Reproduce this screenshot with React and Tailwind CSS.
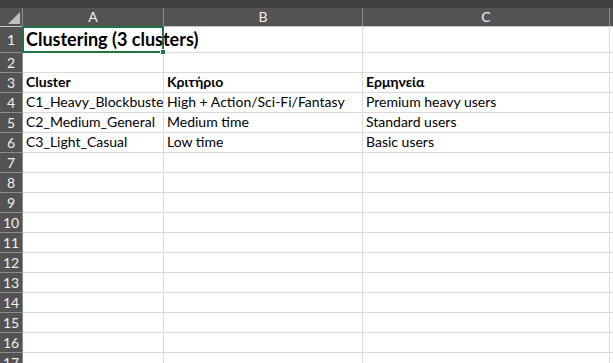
import React from "react";

const rows = [
  { n: 1, a: "Clustering (3 clusters)", title: true },
  { n: 2 },
  { n: 3, a: "Cluster", b: "Κριτήριο", c: "Ερμηνεία", bold: true },
  { n: 4, a: "C1_Heavy_Blockbuster", b: "High + Action/Sci-Fi/Fantasy", c: "Premium heavy users" },
  { n: 5, a: "C2_Medium_General", b: "Medium time", c: "Standard users" },
  { n: 6, a: "C3_Light_Casual", b: "Low time", c: "Basic users" },
];

for (let i = 7; i <= 17; i++) rows.push({ n: i });

const cell = "border-r border-b border-[#dadada] bg-white overflow-hidden whitespace-nowrap flex items-end px-[3px]";

const App = () => {
  return (
    <div
      className="h-[363px] w-[613px] overflow-hidden bg-white text-[14px] leading-[16px] text-black"
      style={{ fontFamily: "Lato, 'Open Sans', sans-serif" }}
    >
      {/* top strip */}
      <div className="h-[8px] bg-[#414141]" />

      {/* column headers */}
      <div className="grid grid-cols-[23px_141px_199px_247px_1fr] grid-rows-[18px] h-[19px] bg-[#535353] border-b border-[#c4c4c4] text-[#f0f0f0]">
        <div className="relative border-r border-[#8c8c8c]">
          <div className="absolute right-[2px] bottom-[2px] w-0 h-0 border-l-[12px] border-l-transparent border-b-[12px] border-b-[#bfbfbf]" />
        </div>
        <div className="border-r border-[#8c8c8c] flex items-center justify-center">A</div>
        <div className="border-r border-[#8c8c8c] flex items-center justify-center">B</div>
        <div className="border-r border-[#8c8c8c] flex items-center justify-center">C</div>
        <div />
      </div>

      {/* sheet rows */}
      {rows.map((r) => (
        <div
          key={r.n}
          className={`grid grid-cols-[23px_141px_199px_247px_1fr] ${r.title ? "grid-rows-[26px] h-[26px]" : "grid-rows-[20px] h-[20px]"}`}
        >
          <div className="bg-[#535353] border-r border-b border-[#8c8c8c] text-[#f0f0f0] flex items-center justify-center">
            {r.n}
          </div>
          <div className={`${cell} relative ${r.title ? "overflow-visible z-10 pb-[4px]" : "pb-[2px]"} ${r.bold ? "font-bold" : ""}`}>
            {r.title ? (
              <span className="text-[18px] font-bold leading-[18px]">{r.a}</span>
            ) : (
              r.a
            )}
            {r.title && (
              <>
                <div className="absolute -left-[1px] -top-[1px] w-[142px] h-[27px] border-2 border-[#217346]" />
                <div className="absolute left-[137px] top-[22px] w-[6px] h-[6px] bg-[#217346] border border-white" />
              </>
            )}
          </div>
          <div className={`${cell} pb-[2px] ${r.bold ? "font-bold" : ""}`}>{r.b}</div>
          <div className={`${cell} pb-[2px] ${r.bold ? "font-bold" : ""}`}>{r.c}</div>
          <div className="border-b border-[#dadada]" />
        </div>
      ))}
    </div>
  );
};

export default App;
